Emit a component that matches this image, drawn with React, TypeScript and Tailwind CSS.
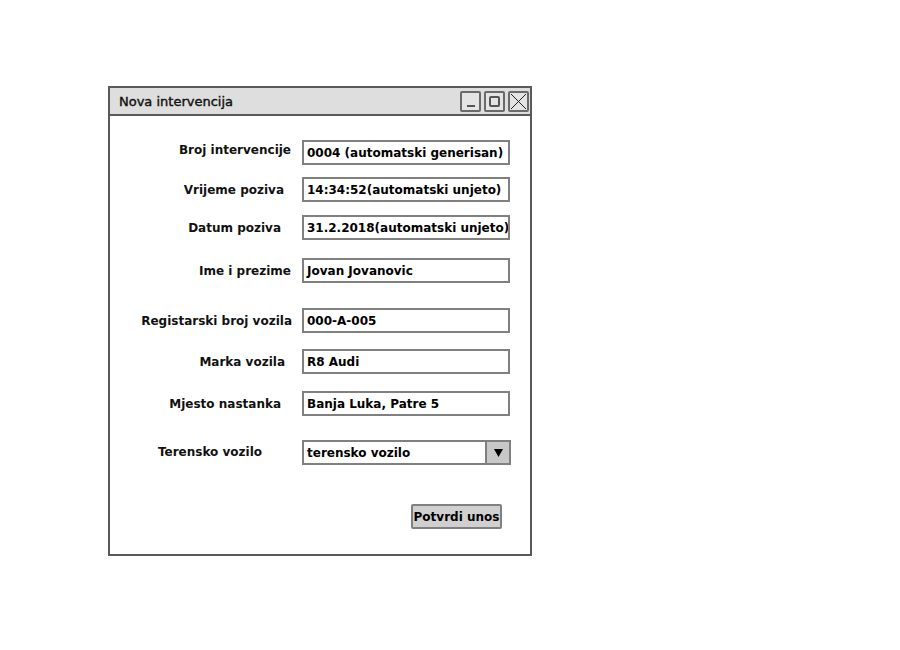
import React from "react";

const font = { fontFamily: '"DejaVu Sans", Verdana, sans-serif' };

type Row = { label: string; value: string; pr: string; mt: string; lift?: boolean };

const rows: Row[] = [
  { label: "Broj intervencije", value: "0004 (automatski generisan)", pr: "pr-[11px]", mt: "mt-[24px]", lift: true },
  { label: "Vrijeme poziva", value: "14:34:52(automatski unjeto)", pr: "pr-[18px]", mt: "mt-[12px]" },
  { label: "Datum poziva", value: "31.2.2018(automatski unjeto)", pr: "pr-[21px]", mt: "mt-[13px]" },
  { label: "Ime i prezime", value: "Jovan Jovanovic", pr: "pr-[11px]", mt: "mt-[18px]" },
  { label: "Registarski broj vozila", value: "000-A-005", pr: "pr-[10px]", mt: "mt-[25px]" },
  { label: "Marka vozila", value: "R8 Audi", pr: "pr-[17px]", mt: "mt-[16px]" },
  { label: "Mjesto nastanka", value: "Banja Luka, Patre 5", pr: "pr-[21px]", mt: "mt-[17px]" },
];

function TitleButton({ children }: { children: React.ReactNode }) {
  return (
    <div className="w-[21px] h-[21px] border-2 border-[#6a6a6a] rounded-[2px] bg-[#e4e4e4] flex items-center justify-center relative">
      {children}
    </div>
  );
}

export default function App() {
  return (
    <div className="w-[900px] h-[650px] bg-white pt-[86px] pl-[108px]" style={font}>
      <div className="w-[424px] border-2 border-[#5a5a5a] bg-white flex flex-col">
        {/* Title bar */}
        <div className="h-[28px] bg-[#dedede] border-b-2 border-[#5a5a5a] flex items-center justify-between pl-[9px] pr-[1px]">
          <span className="text-[13px] text-[#111] leading-none [-webkit-text-stroke:0.4px_#111]">Nova intervencija</span>
          <div className="flex gap-[3px]">
            <TitleButton>
              <div className="absolute left-[5px] bottom-[3px] w-[8px] h-[2px] bg-[#555]" />
            </TitleButton>
            <TitleButton>
              <div className="w-[11px] h-[11px] border-2 border-[#555] rounded-[2px]" />
            </TitleButton>
            <TitleButton>
              <svg width="17" height="17" viewBox="0 0 17 17">
                <path d="M1 1 L16 16 M16 1 L1 16" stroke="#222" strokeWidth="1" fill="none" />
              </svg>
            </TitleButton>
          </div>
        </div>

        {/* Form */}
        <div className="flex flex-col pb-[25px]">
          {rows.map((r) => (
            <div key={r.label} className={`flex items-center ${r.mt}`}>
              <div className={`w-[192px] flex-none text-right text-[12px] font-bold text-[#111] ${r.pr} ${r.lift ? "mb-[6px]" : ""}`}>
                {r.label}
              </div>
              <div className="w-[208px] h-[25px] border-2 border-[#808080] bg-white flex items-center pl-[3px] text-[12px] font-bold text-black whitespace-nowrap overflow-hidden">
                {r.value}
              </div>
            </div>
          ))}

          <div className="flex items-center mt-[24px]">
            <div className="w-[192px] flex-none text-right text-[12px] font-bold text-[#111] pr-[40px] mb-[2px]">
              Terensko vozilo
            </div>
            <div className="w-[209px] h-[25px] border-2 border-[#808080] bg-white flex items-stretch">
              <div className="flex-1 flex items-center pl-[3px] text-[12px] font-bold text-black">terensko vozilo</div>
              <div className="w-[24px] border-l-2 border-[#808080] bg-[#c8c8c8] flex items-center justify-center">
                <svg width="9" height="8" viewBox="0 0 9 8">
                  <path d="M0 0 L9 0 L4.5 8 Z" fill="#000" />
                </svg>
              </div>
            </div>
          </div>

          <div className="flex justify-end pr-[28px] mt-[39px]">
            <div className="w-[91px] h-[25px] border-2 border-[#808080] rounded-[2px] bg-[#d0d0d0] flex items-center justify-center text-[12px] font-bold text-black">
              Potvrdi unos
            </div>
          </div>
        </div>
      </div>
    </div>
  );
}
